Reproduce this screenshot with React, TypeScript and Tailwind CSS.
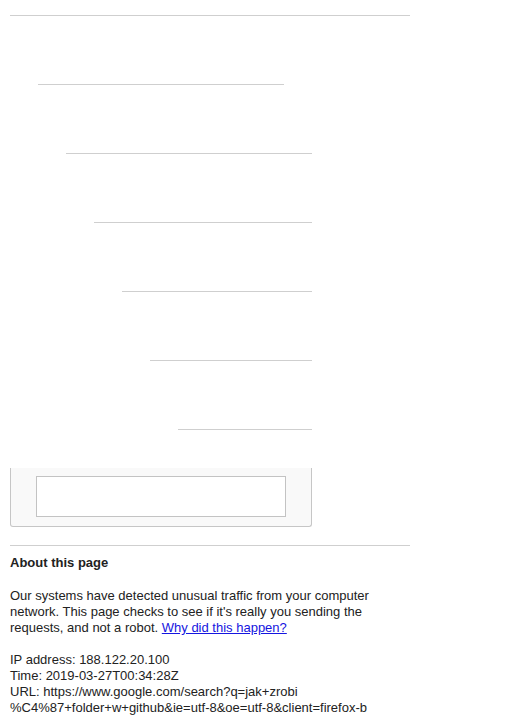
import React from 'react'

const lines = [
  { ml: 'ml-[28px]', w: 'w-[246px]' },
  { ml: 'ml-[56px]', w: 'w-[246px]' },
  { ml: 'ml-[84px]', w: 'w-[218px]' },
  { ml: 'ml-[112px]', w: 'w-[190px]' },
  { ml: 'ml-[140px]', w: 'w-[162px]' },
  { ml: 'ml-[168px]', w: 'w-[134px]' },
]

export default function App() {
  return (
    <div className="min-h-[728px] bg-white px-[10px] font-['Liberation_Sans',Arial,sans-serif] text-[13px] leading-4 text-[#222]">
      <div className="pt-[15px]">
        <div className="h-px w-[400px] bg-[#cfcfcf]" />
      </div>

      <div className="flex flex-col">
        {lines.map((l, i) => (
          <div key={i} className={`mt-[68px] h-px bg-[#cfcfcf] ${l.ml} ${l.w}`} />
        ))}
      </div>

      <div className="mt-[38px] h-[59px] w-[302px] rounded-b-[3px] border-x border-b border-[#c6c6c6] bg-[#f9f9f9] pl-[25px] pt-[8px]">
        <div className="h-[41px] w-[250px] border border-[#c3c3c3] bg-white" />
      </div>

      <div className="mt-[18px] h-px w-[400px] bg-[#cfcfcf]" />

      <div className="mt-[9px] font-bold">About this page</div>

      <p className="mt-[17px] w-[400px]">
        Our systems have detected unusual traffic from your computer network. This page checks to see if it's really you sending the requests, and not a robot.{' '}
        <a href="#" className="text-[#1515e0] underline">Why did this happen?</a>
      </p>

      <div className="mt-4">
        <div>IP address: 188.122.20.100</div>
        <div>Time: 2019-03-27T00:34:28Z</div>
        <div>URL: https://www.google.com/search?q=jak+zrobi</div>
        <div>%C4%87+folder+w+github&amp;ie=utf-8&amp;oe=utf-8&amp;client=firefox-b</div>
      </div>
    </div>
  )
}
